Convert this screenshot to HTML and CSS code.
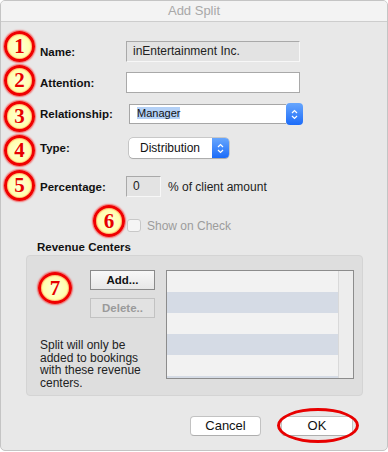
FILE: index.html
```html
<!DOCTYPE html>
<html lang="en">
<head>
    <meta charset="UTF-8">
    <meta name="viewport" content="width=device-width, initial-scale=1.0">
    <title>Add Split</title>
    <link rel="stylesheet" href="styles.css">
</head>
<body>
    <div class="window">
        <div class="titlebar">Add Split</div>

        <div class="content">
            <div class="row">
                <span class="badge up5">1</span>
                <span class="label">Name:</span>
                <div class="input input-disabled input-wide">inEntertainment Inc.</div>
            </div>

            <div class="row row-attention">
                <span class="badge up2">2</span>
                <span class="label">Attention:</span>
                <div class="input input-wide"></div>
            </div>

            <div class="row row-relationship">
                <span class="badge down2">3</span>
                <span class="label">Relationship:</span>
                <div class="combo">
                    <div class="combo-text"><span class="selected">Manager</span></div>
                    <div class="stepper">
                        <svg width="7" height="11" viewBox="0 0 7 11"><path d="M1 4 L3.5 1.5 L6 4 M1 7 L3.5 9.5 L6 7" fill="none" stroke="#fff" stroke-width="1.2"/></svg>
                    </div>
                </div>
            </div>

            <div class="row row-type">
                <span class="badge down2">4</span>
                <span class="label">Type:</span>
                <div class="popup">
                    <div class="popup-text">Distribution</div>
                    <div class="stepper">
                        <svg width="7" height="11" viewBox="0 0 7 11"><path d="M1 4 L3.5 1.5 L6 4 M1 7 L3.5 9.5 L6 7" fill="none" stroke="#fff" stroke-width="1.2"/></svg>
                    </div>
                </div>
            </div>

            <div class="row row-percentage">
                <span class="badge up1">5</span>
                <span class="label">Percentage:</span>
                <div class="input input-disabled input-percent">0</div>
                <span class="suffix">% of client amount</span>
            </div>

            <div class="row row-check">
                <span class="badge badge-check up5">6</span>
                <span class="checkbox"></span>
                <span class="check-label">Show on Check</span>
            </div>

            <div class="section-title">Revenue Centers</div>

            <div class="group">
                <div class="group-left">
                    <div class="group-top">
                        <span class="badge badge-big">7</span>
                        <div class="group-buttons">
                            <div class="btn-small">Add...</div>
                            <div class="btn-small btn-disabled">Delete..</div>
                        </div>
                    </div>
                    <p class="note">Split will only be<br>added to bookings<br>with these revenue<br>centers.</p>
                </div>
                <div class="list">
                    <div class="list-rows">
                        <div class="list-row"></div>
                        <div class="list-row alt"></div>
                        <div class="list-row"></div>
                        <div class="list-row alt"></div>
                        <div class="list-row"></div>
                        <div class="list-row alt"></div>
                    </div>
                    <div class="list-scroll"></div>
                </div>
            </div>

            <div class="footer">
                <div class="btn">Cancel</div>
                <div class="btn-wrap">
                    <div class="btn btn-ok">OK</div>
                </div>
            </div>
        </div>
    </div>
</body>
</html>
```

FILE: styles.css
```css
body {
    margin: 0;
    background: #fff;
    font-family: "Liberation Sans", Arial, sans-serif;
    color: #1c1c1c;
}

.window {
    width: 388px;
    height: 451px;
    box-sizing: border-box;
    background: #e8e8e8;
    border: 1px solid #c4c4c4;
    border-radius: 5px;
    overflow: hidden;
}

.titlebar {
    height: 20px;
    line-height: 20px;
    text-align: center;
    font-size: 13px;
    color: #a8a8a8;
    background: #f3f3f3;
    border-bottom: 1px solid #cdcdcd;
}

.content {
    padding-top: 19px;
}

.row {
    display: flex;
    align-items: center;
    height: 21px;
}

.row-attention {
    margin-top: 10px;
}

.row-relationship {
    margin-top: 11px;
    height: 20px;
}

.row-type {
    margin-top: 14px;
    height: 20px;
}

.row-percentage {
    margin-top: 18px;
}

.row-check {
    margin-top: 22px;
    height: 13px;
}

/* numbered annotation circles */
.badge {
    flex: none;
    width: 31px;
    height: 31px;
    box-sizing: border-box;
    margin-left: 3px;
    margin-right: 5px;
    border: 3px solid #f00000;
    border-radius: 50%;
    background: radial-gradient(circle, #ffffd8 0%, #ffffa4 75%);
    box-shadow: 0 0 1.5px 1px rgba(255, 0, 0, 0.55), inset 0 0 1px 1px rgba(255, 60, 0, 0.35);
    font-family: "Liberation Serif", "Times New Roman", serif;
    font-weight: bold;
    font-size: 21px;
    line-height: 25px;
    text-align: center;
    color: #e60000;
}

.up5 { margin-bottom: 10px; }
.up2 { margin-bottom: 4px; }
.up1 { margin-bottom: 2px; }
.down2 { margin-top: 4px; }

.label {
    width: 86px;
    font-size: 11.5px;
    font-weight: bold;
    color: #111;
}

.input {
    box-sizing: border-box;
    height: 21px;
    border: 1px solid #a9a9a9;
    background: #fff;
    font-size: 12px;
    line-height: 19px;
    padding: 0 6px;
    color: #222;
}

.input-disabled {
    background: #e3e3e3;
    border-right-color: #f7f7f7;
    border-bottom-color: #f7f7f7;
}

.input-wide {
    width: 174px;
}

.input-percent {
    width: 35px;
}

.suffix {
    margin-left: 7px;
    font-size: 12px;
    color: #222;
}

.combo {
    display: flex;
    width: 174px;
    height: 20px;
    margin-left: 3px;
}

.combo-text {
    flex: 1;
    background: #fff;
    border: 1px solid #a6a6a6;
    border-right: none;
    padding-left: 7px;
    font-size: 11px;
    line-height: 16px;
}

.selected {
    display: inline-block;
    background: #b3d0f6;
    line-height: 12px;
    color: #111;
}

.stepper {
    width: 17px;
    display: flex;
    align-items: center;
    justify-content: center;
    background: linear-gradient(#67a6fd, #1c6cf9);
    border-radius: 0 4px 4px 0;
}

.combo .stepper {
    border-radius: 4px;
    margin: -1px 0;
}

.popup {
    display: flex;
    width: 100px;
    height: 20px;
    margin-left: 3px;
    border-radius: 4px;
    background: #fff;
    box-shadow: 0 0 0 0.5px rgba(0, 0, 0, 0.28), 0 1px 1px rgba(0, 0, 0, 0.15);
}

.popup-text {
    flex: 1;
    padding-left: 11px;
    font-size: 12px;
    line-height: 20px;
    color: #111;
}

.badge-check {
    width: 32px;
    height: 32px;
    margin-left: 92px;
    margin-right: 2px;
    line-height: 26px;
}

.checkbox {
    width: 14px;
    height: 13px;
    box-sizing: border-box;
    border: 1px solid #c8c8c8;
    border-radius: 3px;
    background: #f5f5f5;
}

.check-label {
    margin-left: 6px;
    font-size: 12px;
    color: #9c9c9c;
}

.section-title {
    margin: 8px 0 0 36px;
    font-size: 11.5px;
    font-weight: bold;
    line-height: 14px;
    color: #111;
}

.group {
    display: grid;
    grid-template-columns: 1fr 188px;
    height: 141px;
    box-sizing: border-box;
    margin: 1px 0 0 25px;
    width: 337px;
    padding: 14px 8px 0 0;
    background: #dedede;
    border: 1px solid #d4d4d4;
    border-radius: 4px;
}

.group-top {
    display: flex;
}

.badge-big {
    width: 34px;
    height: 32px;
    margin: 2px 0 0 11px;
    line-height: 26px;
}

.group-buttons {
    margin-left: 18px;
}

.btn-small {
    width: 65px;
    height: 20px;
    box-sizing: border-box;
    border: 1px solid #8a8a8a;
    background: linear-gradient(#f8f8f8, #e7e7e7);
    font-size: 11.5px;
    font-weight: bold;
    line-height: 18px;
    text-align: center;
    color: #111;
}

.btn-disabled {
    margin-top: 8px;
    border-color: #c2c2c2;
    background: #e2e2e2;
    color: #9a9a9a;
}

.note {
    margin: 21px 0 0 13px;
    font-size: 12px;
    line-height: 12.7px;
    color: #222;
}

.list {
    display: flex;
    height: 109px;
    box-sizing: border-box;
    border: 1px solid #8c8c8c;
    background: #f2f2f2;
}

.list-rows {
    flex: 1;
    overflow: hidden;
}

.list-row {
    height: 21px;
    background: #f2f2f2;
}

.list-row.alt {
    background: #d5dbe5;
}

.list-scroll {
    width: 14px;
    background: #ededed;
    border-left: 1px solid #d9d9d9;
}

.footer {
    display: flex;
    justify-content: flex-end;
    gap: 20px;
    margin-top: 20px;
    padding-right: 34px;
}

.btn {
    width: 71px;
    height: 20px;
    box-sizing: border-box;
    border: 1px solid #c2c2c2;
    border-bottom-color: #aeaeae;
    border-radius: 4px;
    background: #fff;
    font-size: 13px;
    line-height: 18px;
    text-align: center;
    color: #111;
}

.btn-ok {
    width: 72px;
}

.btn-wrap {
    position: relative;
}

/* red annotation ring round the OK button */
.btn-wrap:after {
    content: '';
    position: absolute;
    left: -4px;
    top: -8px;
    width: 82px;
    height: 35px;
    box-sizing: border-box;
    border: 3px solid #e80000;
    border-radius: 50%;
}
```
